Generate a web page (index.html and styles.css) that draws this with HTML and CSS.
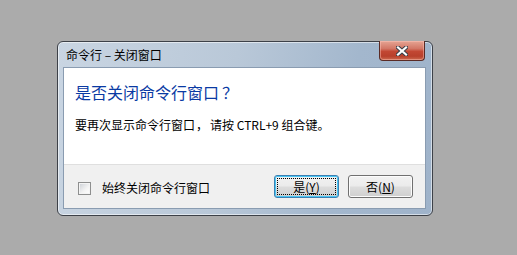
FILE: index.html
```html
<!DOCTYPE html>
<html lang="zh-CN">
<head>
<meta charset="utf-8">
<title>命令行 – 关闭窗口</title>
<link rel="stylesheet" href="styles.css">
</head>
<body>
<div class="window">
  <div class="titlebar">
    <span class="title">命令行 – 关闭窗口</span>
    <button class="close" aria-label="关闭">
      <svg width="12" height="10" viewBox="0 0 12 10">
        <path d="M2 1.5 L10 8.5 M10 1.5 L2 8.5" stroke="#3a3f48" stroke-width="4.2" stroke-linecap="square" fill="none"/>
        <path d="M2 1.5 L10 8.5 M10 1.5 L2 8.5" stroke="#ffffff" stroke-width="2.2" stroke-linecap="square" fill="none"/>
      </svg>
    </button>
  </div>
  <div class="client">
    <div class="content">
      <div class="instruction">是否关闭命令行窗口<span class="qmark">？</span></div>
      <div class="message">要再次显示命令行窗口<span class="comma">，</span>请按 CTRL+9 组合键。</div>
    </div>
    <div class="footer">
      <label class="check"><span class="box"></span><span class="check-label">始终关闭命令行窗口</span></label>
      <div class="buttons">
        <button class="btn default"><span class="focus">是(<u>Y</u>)</span></button>
        <button class="btn"><span class="plain">否(<u>N</u>)</span></button>
      </div>
    </div>
  </div>
</div>
</body>
</html>
```
FILE: styles.css
```css
html, body {
  margin: 0;
  padding: 0;
  background: #ababab;
  font-family: "Noto Sans CJK SC", "Noto Sans", sans-serif;
}

.window {
  margin: 41px 0 0 57px;
  width: 363px;
  height: 167px;
  border: 1px solid #3d4148;
  border-radius: 6px;
  background: linear-gradient(100deg, #c9d5e2 0%, #b9c8d8 45%, #a3b7cd 75%, #9fb3ca 100%);
  box-shadow: inset 0 0 0 1px rgba(255,255,255,0.55);
  display: flex;
  flex-direction: column;
  padding: 0 6px 6px 5px;
}

.titlebar {
  height: 25px;
  flex: none;
  display: flex;
  align-items: center;
  justify-content: space-between;
}

.title {
  font-size: 12px;
  color: #000;
  margin-left: 3px;
  line-height: 14px;
}

.close {
  align-self: flex-start;
  margin-top: -1px;
  margin-right: 1px;
  width: 46px;
  height: 20px;
  padding: 0;
  border: 1px solid #5a2a24;
  border-top: none;
  border-radius: 0 0 4px 4px;
  background: linear-gradient(180deg, #e6a594 0%, #d27766 40%, #c24733 55%, #b8402c 80%, #cd6a4f 100%);
  box-shadow: inset 0 0 0 1px rgba(255,200,190,0.45);
  display: flex;
  align-items: center;
  justify-content: center;
}

.close svg { display: block; }

.client {
  flex: 1;
  display: flex;
  flex-direction: column;
  border: 1px solid #8a9cb1;
  background: #f0f0f0;
}

.content {
  background: #ffffff;
  height: 97px;
  flex: none;
  padding: 13px 11px 0 11px;
  box-sizing: border-box;
  border-bottom: 1px solid #dfdfdf;
}

.instruction {
  font-size: 16px;
  line-height: 22px;
  color: #0a3aa3;
}

.qmark { margin-left: 3px; }

.message {
  margin-top: 14px;
  font-size: 12px;
  line-height: 16px;
  color: #000;
}

.comma { margin: 0 2px 0 1px; }

.footer {
  flex: 1;
  display: flex;
  align-items: center;
  justify-content: space-between;
  padding: 0 12px 0 14px;
}

.check {
  display: flex;
  align-items: center;
  gap: 11px;
  margin-top: 3px;
}

.box {
  width: 11px;
  height: 11px;
  border: 1px solid #8e8f8f;
  background: linear-gradient(135deg, #cbcfd5 0%, #f4f4f4 60%, #ffffff 100%);
  box-shadow: inset 0 0 0 1px #f4f4f4;
}

.check-label {
  font-size: 12px;
  line-height: 16px;
  color: #000;
}

.buttons {
  display: flex;
  gap: 9px;
}

.btn {
  width: 65px;
  height: 23px;
  padding: 0;
  border: 1px solid #707070;
  border-radius: 3px;
  background: linear-gradient(180deg, #f2f2f2 0%, #ebebeb 48%, #dddddd 52%, #cfcfcf 100%);
  box-shadow: inset 0 0 0 1px #fcfcfc;
  font-family: "Noto Sans CJK SC", "Noto Sans", sans-serif;
  font-size: 12px;
  color: #000;
  display: flex;
  align-items: center;
  justify-content: center;
}

.btn.default {
  border-color: #3c7fb1;
  box-shadow: inset 0 0 0 1px #48c6f4;
  padding: 2px;
}

.focus {
  flex: 1;
  align-self: stretch;
  display: flex;
  align-items: center;
  justify-content: center;
  border: 1px dotted #000;
  line-height: 14px;
}

.plain {
  line-height: 14px;
}
```
